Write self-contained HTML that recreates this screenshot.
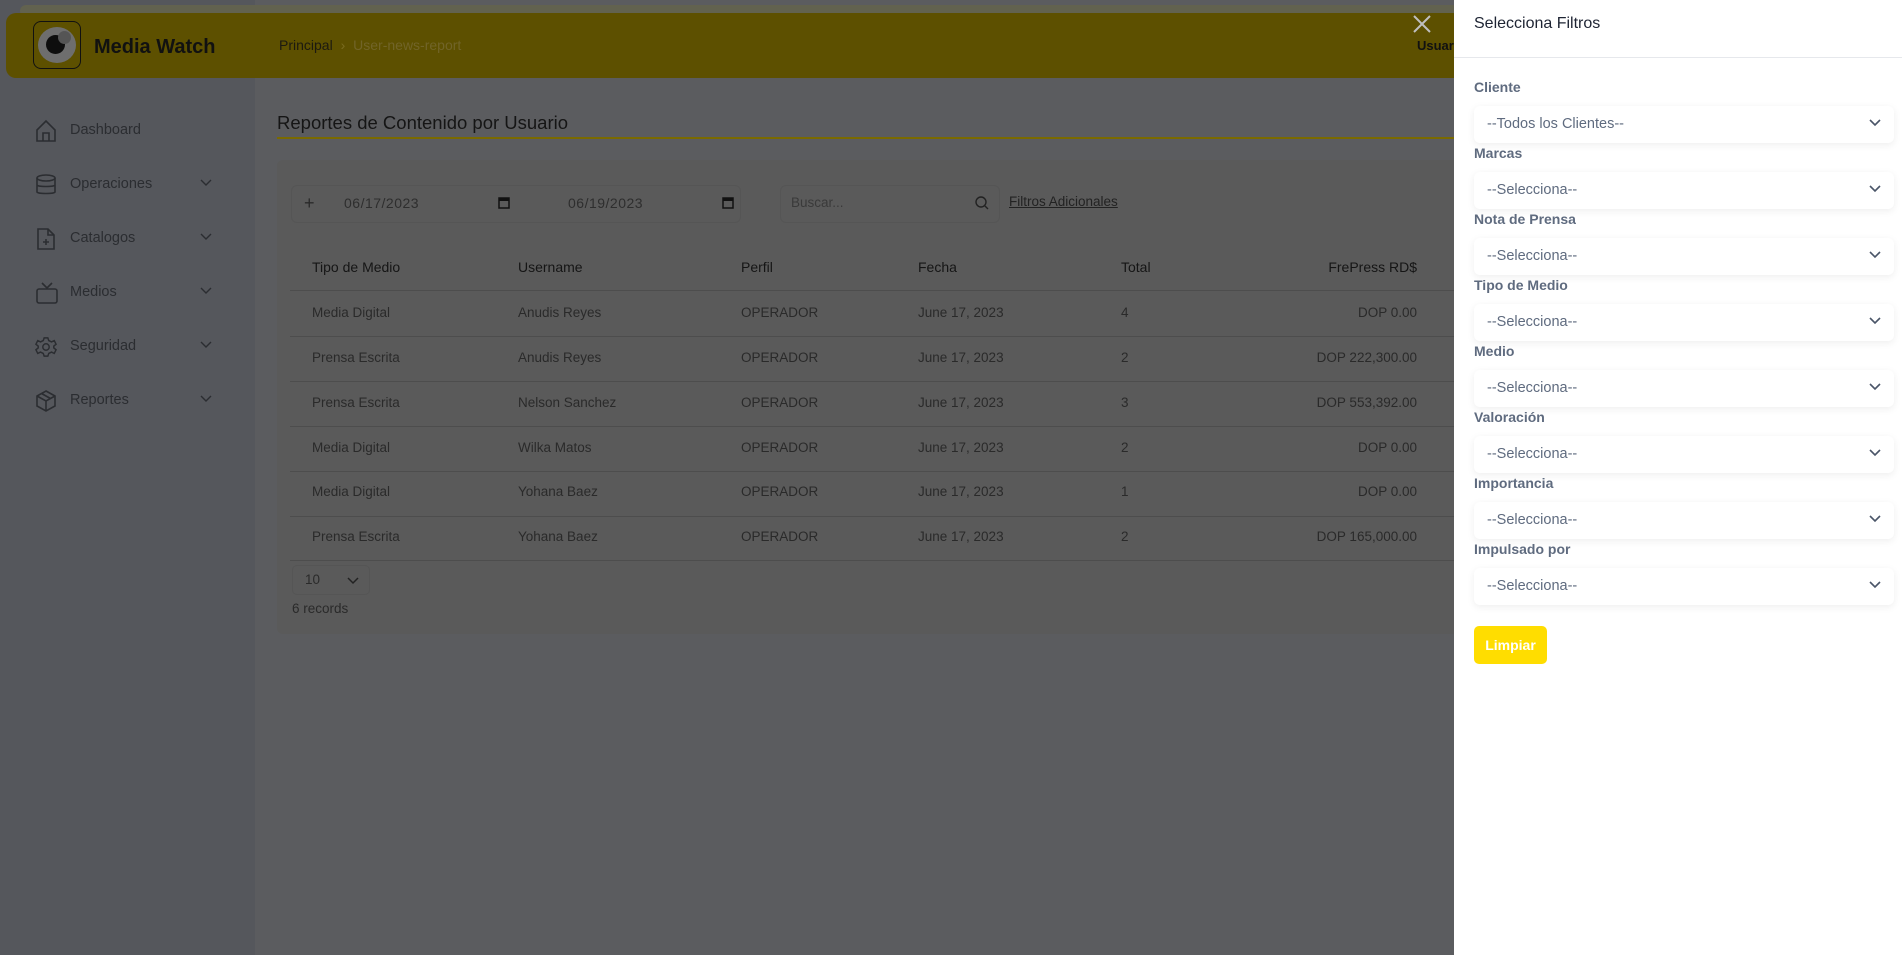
<!DOCTYPE html>
<html><head><meta charset="utf-8"><style>
*{box-sizing:border-box;margin:0;padding:0}
body{width:1902px;height:955px;overflow:hidden;background:#5b5c5f;font-family:"Liberation Sans",sans-serif;position:relative;font-size:14px}
.abs{position:absolute}
.side{left:0;top:0;width:255px;height:955px;background:#55575c}
.hdr{left:6px;top:13px;width:1460px;height:65px;background:#5d5000;border-radius:10px}
.hdrsh{left:20px;top:5px;width:1440px;height:12px;background:#62624f;border-radius:8px}
.nav{left:0;width:255px;height:30px;color:#2b2d31;font-size:14.5px}
.nav span{position:absolute;left:70px;top:6px}
.nav svg.i{position:absolute;left:35px;top:3px}
.nav .ch{position:absolute;left:200px;top:9px}
.card{left:277px;top:160px;width:1190px;height:474px;background:#5a5a5a;border-radius:6px}
.t{position:absolute;color:#2a2a2a;font-size:13.5px}
.th{color:#151515;font-size:14px}
.line{position:absolute;left:290px;width:1170px;height:1px;background:#4d4d4d}
.panel{left:1454px;top:0;width:448px;height:955px;background:#fff}
.lab{position:absolute;left:20px;font-weight:bold;color:#5f6b7f;font-size:14px}
.sel{position:absolute;left:20px;width:420px;height:37px;background:#fff;border-radius:6px;box-shadow:0 2px 8px rgba(0,0,0,.07);color:#5f6b7f;font-size:14.5px;padding:10px 13px}
.sel svg{position:absolute;right:13px;top:13px}
</style></head><body>
<div class="abs side"></div>
<div class="abs hdrsh"></div>
<div class="abs hdr"></div>
<div class="abs" style="left:33px;top:21px;width:48px;height:48px;border:1px solid #111;border-radius:8px;background:#5d5000"></div>
<div class="abs" style="left:38px;top:27px;width:38px;height:36px;border-radius:50%;background:#6e6e6e"></div>
<div class="abs" style="left:46px;top:35px;width:19px;height:19px;border-radius:50%;background:#0e0e0e"></div>
<div class="abs" style="left:58px;top:31px;width:13px;height:13px;border-radius:50%;background:#555"></div>
<div class="abs" style="left:94px;top:36px;font-size:20px;font-weight:bold;color:#111">Media Watch</div>
<div class="abs" style="left:279px;top:37px;font-size:14px;color:#1c1a10">Principal <span style="color:#7a6c20;margin:0 4px">›</span> <span style="color:#716428">User-news-report</span></div>
<div class="abs" style="left:1417px;top:38px;font-size:13px;font-weight:bold;color:#111">Usuar</div>
<svg class="abs" style="left:1412px;top:14px" width="20" height="20" viewBox="0 0 20 20"><path d="M2 2L18 18M18 2L2 18" stroke="#bfbfbf" stroke-width="2"/></svg>

<div class="abs nav" style="top:116px"><svg class="i" width="22" height="24" viewBox="0 0 22 24" fill="none" stroke="#2b2d31" stroke-width="1.6"><path d="M2 11L11 2L20 11V22H2Z"/><path d="M8 22V14H14V22"/></svg><span>Dashboard</span></div>
<div class="abs nav" style="top:170px"><svg class="i" width="22" height="24" viewBox="0 0 22 24" fill="none" stroke="#2b2d31" stroke-width="1.6"><ellipse cx="11" cy="5" rx="9" ry="3"/><path d="M2 5V19C2 21 20 21 20 19V5M2 12C2 14 20 14 20 12"/></svg><span>Operaciones</span><svg class="ch" width="12" height="8"><path d="M1 1L6 6L11 1" stroke="#2b2d31" fill="none" stroke-width="1.4"/></svg></div>
<div class="abs nav" style="top:224px"><svg class="i" width="22" height="24" viewBox="0 0 22 24" fill="none" stroke="#2b2d31" stroke-width="1.6"><path d="M3 2H13L19 8V22H3Z"/><path d="M13 2V8H19M11 12V18M8 15H14"/></svg><span>Catalogos</span><svg class="ch" width="12" height="8"><path d="M1 1L6 6L11 1" stroke="#2b2d31" fill="none" stroke-width="1.4"/></svg></div>
<div class="abs nav" style="top:278px"><svg class="i" width="24" height="24" viewBox="0 0 24 24" fill="none" stroke="#2b2d31" stroke-width="1.6"><rect x="2" y="8" width="20" height="14" rx="2"/><path d="M7 2L12 7L17 2"/></svg><span>Medios</span><svg class="ch" width="12" height="8"><path d="M1 1L6 6L11 1" stroke="#2b2d31" fill="none" stroke-width="1.4"/></svg></div>
<div class="abs nav" style="top:332px"><svg class="i" width="22" height="24" viewBox="0 0 24 24" fill="none" stroke="#2b2d31" stroke-width="1.6"><circle cx="12" cy="12" r="3.5"/><path d="M10 2H14L15 5L18 6.5L21 5L23 9L20.5 11V13L23 15L21 19L18 17.5L15 19L14 22H10L9 19L6 17.5L3 19L1 15L3.5 13V11L1 9L3 5L6 6.5L9 5Z"/></svg><span>Seguridad</span><svg class="ch" width="12" height="8"><path d="M1 1L6 6L11 1" stroke="#2b2d31" fill="none" stroke-width="1.4"/></svg></div>
<div class="abs nav" style="top:386px"><svg class="i" width="22" height="24" viewBox="0 0 22 24" fill="none" stroke="#2b2d31" stroke-width="1.6"><path d="M11 2L20 7V17L11 22L2 17V7Z"/><path d="M2 7L11 12L20 7M11 12V22M6.5 4.5L15.5 9.5"/></svg><span>Reportes</span><svg class="ch" width="12" height="8"><path d="M1 1L6 6L11 1" stroke="#2b2d31" fill="none" stroke-width="1.4"/></svg></div>

<div class="abs" style="left:277px;top:112px;font-size:18.5px;color:#151515">Reportes de Contenido por Usuario</div>
<div class="abs" style="left:277px;top:137px;width:1180px;height:2px;background:#7a6a00"></div>
<div class="abs card"></div>
<div class="abs" style="left:291px;top:185px;width:450px;height:38px;border:1px solid #555;border-radius:6px"></div>
<div class="abs" style="left:780px;top:185px;width:220px;height:38px;border:1px solid #555;border-radius:6px"></div>
<div class="t" style="left:304px;top:193px;font-size:18px">+</div>
<div class="t" style="left:344px;top:195px;color:#2e2e2e;font-size:14px;letter-spacing:.5px">06/17/2023</div>
<div class="t" style="left:568px;top:195px;color:#2e2e2e;font-size:14px;letter-spacing:.5px">06/19/2023</div>
<svg class="abs" style="left:498px;top:196px" width="12" height="13"><rect x="1" y="2" width="10" height="10" fill="none" stroke="#111" stroke-width="1.5"/><rect x="1" y="2" width="10" height="3" fill="#111"/></svg>
<svg class="abs" style="left:722px;top:196px" width="12" height="13"><rect x="1" y="2" width="10" height="10" fill="none" stroke="#111" stroke-width="1.5"/><rect x="1" y="2" width="10" height="3" fill="#111"/></svg>
<div class="t" style="left:791px;top:195px;color:#3a3a3a">Buscar...</div>
<svg class="abs" style="left:975px;top:196px" width="14" height="14" fill="none" stroke="#222" stroke-width="1.4"><circle cx="6" cy="6" r="5"/><path d="M10 10L13 13"/></svg>
<div class="t" style="left:1009px;top:194px;text-decoration:underline;color:#222">Filtros Adicionales</div>

<div class="t th" style="left:312px;top:259px">Tipo de Medio</div>
<div class="t th" style="left:518px;top:259px">Username</div>
<div class="t th" style="left:741px;top:259px">Perfil</div>
<div class="t th" style="left:918px;top:259px">Fecha</div>
<div class="t th" style="left:1121px;top:259px">Total</div>
<div class="t th" style="left:1300px;top:259px;width:117px;text-align:right">FrePress RD$</div>
<div class="line" style="top:290px"></div>

<div class="t" style="left:312px;top:305px">Media Digital</div><div class="t" style="left:518px;top:305px">Anudis Reyes</div><div class="t" style="left:741px;top:305px">OPERADOR</div><div class="t" style="left:918px;top:305px">June 17, 2023</div><div class="t" style="left:1121px;top:305px">4</div><div class="t" style="left:1250px;top:305px;width:167px;text-align:right">DOP 0.00</div>
<div class="line" style="top:336px"></div>
<div class="t" style="left:312px;top:350px">Prensa Escrita</div><div class="t" style="left:518px;top:350px">Anudis Reyes</div><div class="t" style="left:741px;top:350px">OPERADOR</div><div class="t" style="left:918px;top:350px">June 17, 2023</div><div class="t" style="left:1121px;top:350px">2</div><div class="t" style="left:1250px;top:350px;width:167px;text-align:right">DOP 222,300.00</div>
<div class="line" style="top:381px"></div>
<div class="t" style="left:312px;top:395px">Prensa Escrita</div><div class="t" style="left:518px;top:395px">Nelson Sanchez</div><div class="t" style="left:741px;top:395px">OPERADOR</div><div class="t" style="left:918px;top:395px">June 17, 2023</div><div class="t" style="left:1121px;top:395px">3</div><div class="t" style="left:1250px;top:395px;width:167px;text-align:right">DOP 553,392.00</div>
<div class="line" style="top:426px"></div>
<div class="t" style="left:312px;top:440px">Media Digital</div><div class="t" style="left:518px;top:440px">Wilka Matos</div><div class="t" style="left:741px;top:440px">OPERADOR</div><div class="t" style="left:918px;top:440px">June 17, 2023</div><div class="t" style="left:1121px;top:440px">2</div><div class="t" style="left:1250px;top:440px;width:167px;text-align:right">DOP 0.00</div>
<div class="line" style="top:471px"></div>
<div class="t" style="left:312px;top:484px">Media Digital</div><div class="t" style="left:518px;top:484px">Yohana Baez</div><div class="t" style="left:741px;top:484px">OPERADOR</div><div class="t" style="left:918px;top:484px">June 17, 2023</div><div class="t" style="left:1121px;top:484px">1</div><div class="t" style="left:1250px;top:484px;width:167px;text-align:right">DOP 0.00</div>
<div class="line" style="top:516px"></div>
<div class="t" style="left:312px;top:529px">Prensa Escrita</div><div class="t" style="left:518px;top:529px">Yohana Baez</div><div class="t" style="left:741px;top:529px">OPERADOR</div><div class="t" style="left:918px;top:529px">June 17, 2023</div><div class="t" style="left:1121px;top:529px">2</div><div class="t" style="left:1250px;top:529px;width:167px;text-align:right">DOP 165,000.00</div>
<div class="line" style="top:560px"></div>
<div class="abs" style="left:292px;top:565px;width:78px;height:30px;border:1px solid #555;border-radius:5px"></div>
<div class="t" style="left:305px;top:572px">10</div>
<svg class="abs" style="left:347px;top:577px" width="12" height="8"><path d="M1 1L6 6L11 1" stroke="#222" fill="none" stroke-width="1.5"/></svg>
<div class="t" style="left:292px;top:601px">6 records</div>

<div class="abs panel">
<div class="abs" style="left:20px;top:15px;font-size:16px;color:#1e2433">Selecciona Filtros</div>
<div class="abs" style="left:0;top:57px;width:448px;height:1px;background:#e6e8ec"></div>
<div class="lab" style="top:79px">Cliente</div>
<div class="sel" style="top:106px">--Todos los Clientes--<svg width="12" height="8"><path d="M1 1L6 6L11 1" stroke="#4a5568" fill="none" stroke-width="1.6"/></svg></div>
<div class="lab" style="top:145px">Marcas</div>
<div class="sel" style="top:172px">--Selecciona--<svg width="12" height="8"><path d="M1 1L6 6L11 1" stroke="#4a5568" fill="none" stroke-width="1.6"/></svg></div>
<div class="lab" style="top:211px">Nota de Prensa</div>
<div class="sel" style="top:238px">--Selecciona--<svg width="12" height="8"><path d="M1 1L6 6L11 1" stroke="#4a5568" fill="none" stroke-width="1.6"/></svg></div>
<div class="lab" style="top:277px">Tipo de Medio</div>
<div class="sel" style="top:304px">--Selecciona--<svg width="12" height="8"><path d="M1 1L6 6L11 1" stroke="#4a5568" fill="none" stroke-width="1.6"/></svg></div>
<div class="lab" style="top:343px">Medio</div>
<div class="sel" style="top:370px">--Selecciona--<svg width="12" height="8"><path d="M1 1L6 6L11 1" stroke="#4a5568" fill="none" stroke-width="1.6"/></svg></div>
<div class="lab" style="top:409px">Valoración</div>
<div class="sel" style="top:436px">--Selecciona--<svg width="12" height="8"><path d="M1 1L6 6L11 1" stroke="#4a5568" fill="none" stroke-width="1.6"/></svg></div>
<div class="lab" style="top:475px">Importancia</div>
<div class="sel" style="top:502px">--Selecciona--<svg width="12" height="8"><path d="M1 1L6 6L11 1" stroke="#4a5568" fill="none" stroke-width="1.6"/></svg></div>
<div class="lab" style="top:541px">Impulsado por</div>
<div class="sel" style="top:568px">--Selecciona--<svg width="12" height="8"><path d="M1 1L6 6L11 1" stroke="#4a5568" fill="none" stroke-width="1.6"/></svg></div>
<div class="abs" style="left:20px;top:626px;width:73px;height:38px;background:#ffdd00;border-radius:5px;color:#fff;font-weight:bold;font-size:14px;text-align:center;line-height:38px">Limpiar</div>
</div>
</body></html>
